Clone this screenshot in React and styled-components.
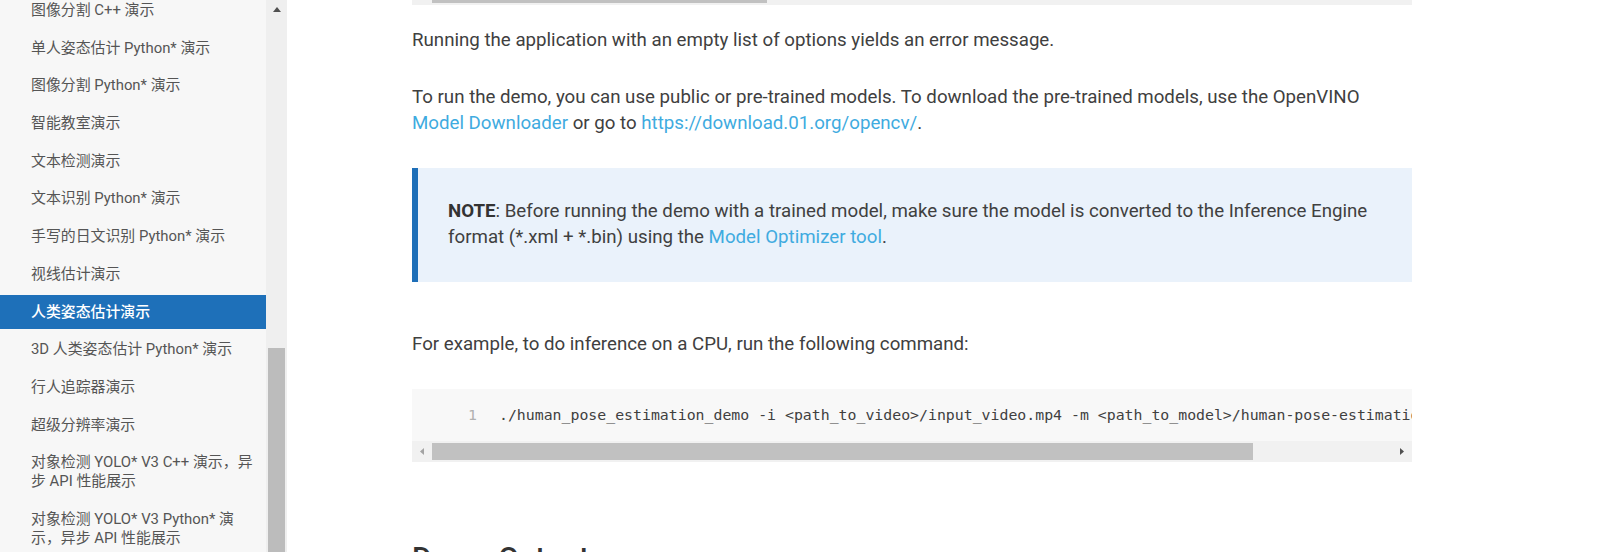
import styled, { createGlobalStyle } from "styled-components";

const GlobalStyle = createGlobalStyle`
  html, body {
    margin: 0;
    padding: 0;
    background: #ffffff;
    overflow: hidden;
  }
  body {
    font-family: Roboto, "Noto Sans CJK SC", sans-serif;
  }
`;

const Page = styled.div`
  display: flex;
  width: 1607px;
  height: 552px;
  overflow: hidden;
`;

const Sidebar = styled.nav`
  width: 266px;
  flex: none;
  background-color: #f7f7f7;
  overflow: hidden;
`;

const NavList = styled.ul`
  list-style: none;
  margin: -6.5px 0 0 0;
  padding: 0;
`;

const NavItem = styled.li`
  padding: 7.5px 8px 7.5px 31px;
  margin-bottom: 3.7px;
  font-family: Roboto, "Noto Sans CJK SC", sans-serif;
  font-size: 14.9px;
  line-height: 19px;
  color: ${(p) => (p.$active ? "#ffffff" : "#555555")};
  background-color: ${(p) => (p.$active ? "#1e70b9" : "transparent")};
  font-weight: ${(p) => (p.$active ? 500 : 400)};
`;

const VScroll = styled.div`
  width: 21px;
  flex: none;
  background-color: #efefef;
  display: flex;
  flex-direction: column;
  align-items: center;
`;

const ArrowBtn = styled.div`
  width: 21px;
  height: 18px;
  display: flex;
  align-items: center;
  justify-content: center;
  flex: none;
`;

const VThumb = styled.div`
  margin-top: 330px;
  width: 17px;
  flex: 1;
  background-color: #bcbcbc;
`;

const Main = styled.main`
  width: 1000px;
  padding-left: 125px;
  flex: none;
  color: #404040;
`;

const HTrack = styled.div`
  display: flex;
  align-items: ${(p) => (p.$top ? "flex-start" : "center")};
  height: ${(p) => p.$h}px;
  background-color: #f1f1f1;
  padding: ${(p) => p.$pad}px 0;
`;

const HThumb = styled.div`
  height: ${(p) => (p.$th ? `${p.$th}px` : "100%")};
  width: ${(p) => p.$w}px;
  margin-left: ${(p) => p.$left}px;
  background-color: #c1c1c1;
`;

const HArrow = styled.div`
  width: 20px;
  height: 100%;
  flex: none;
  display: flex;
  align-items: center;
  justify-content: center;
`;

const Spacer = styled.div`
  flex: 1;
`;

const Para = styled.p`
  margin: ${(p) => p.$top || 0}px 0 0 0;
  font-size: 18.7px;
  line-height: 26.5px;
`;

const Link = styled.a`
  color: #3fabe0;
  text-decoration: none;
`;

const Note = styled.div`
  margin-top: 30.75px;
  background-color: #eaf2fb;
  border-left: 6px solid #1e6fb8;
  padding: 30px 30px 31px 30px;
  font-size: 18.7px;
  line-height: 26.5px;
`;

const Strong = styled.strong`
  font-weight: 700;
  color: #333333;
`;

const CodeBlock = styled.div`
  margin-top: 30.75px;
  background-color: #f8f8f8;
  overflow: hidden;
`;

const CodeLine = styled.div`
  display: flex;
  padding: 16px 0;
  font-family: "DejaVu Sans Mono", "Liberation Mono", monospace;
  font-size: 14.85px;
  line-height: 20px;
  white-space: pre;
`;

const LineNo = styled.span`
  width: 87px;
  flex: none;
  text-align: right;
  padding-right: 22px;
  box-sizing: border-box;
  color: #b0b0b0;
`;

const Code = styled.span`
  color: #404040;
`;

const Heading = styled.h2`
  margin: 78px 0 0 0;
  font-size: 30px;
  font-weight: 500;
  line-height: 36px;
  color: #333333;
`;

const Tri = ({ dir, color, w = 8, h = 5 }) => {
  const pts = {
    up: `0,${h} ${w / 2},0 ${w},${h}`,
    left: `${h},0 0,${w / 2} ${h},${w}`,
    right: `0,0 ${h},${w / 2} 0,${w}`,
  }[dir];
  const vw = dir === "up" ? w : h;
  const vh = dir === "up" ? h : w;
  return (
    <svg width={vw} height={vh} viewBox={`0 0 ${vw} ${vh}`}>
      <polygon points={pts} fill={color} />
    </svg>
  );
};

const navItems = [
  "图像分割 C++ 演示",
  "单人姿态估计 Python* 演示",
  "图像分割 Python* 演示",
  "智能教室演示",
  "文本检测演示",
  "文本识别 Python* 演示",
  "手写的日文识别 Python* 演示",
  "视线估计演示",
  "人类姿态估计演示",
  "3D 人类姿态估计 Python* 演示",
  "行人追踪器演示",
  "超级分辨率演示",
  "对象检测 YOLO* V3 C++ 演示，异步 API 性能展示",
  "对象检测 YOLO* V3 Python* 演示，异步 API 性能展示",
];

export default function App() {
  return (
    <>
      <GlobalStyle />
      <Page>
        <Sidebar>
          <NavList>
            {navItems.map((t) => (
              <NavItem key={t} $active={t === "人类姿态估计演示"}>
                {t}
              </NavItem>
            ))}
          </NavList>
        </Sidebar>
        <VScroll>
          <ArrowBtn>
            <Tri dir="up" color="#505050" />
          </ArrowBtn>
          <VThumb />
        </VScroll>
        <Main>
          <HTrack $h={5} $pad={0} $top>
            <HThumb $w={335} $left={20} $th={3} />
          </HTrack>
          <Para $top={21.75}>
            Running the application with an empty list of options yields an error message.
          </Para>
          <Para $top={30.5}>
            To run the demo, you can use public or pre-trained models. To download the pre-trained models, use the OpenVINO{" "}
            <Link href="#">Model Downloader</Link> or go to{" "}
            <Link href="#">https://download.01.org/opencv/</Link>.
          </Para>
          <Note>
            <Strong>NOTE</Strong>: Before running the demo with a trained model, make sure the model is converted to the Inference Engine
            format (*.xml + *.bin) using the <Link href="#">Model Optimizer tool</Link>.
          </Note>
          <Para $top={49.75}>For example, to do inference on a CPU, run the following command:</Para>
          <CodeBlock>
            <CodeLine>
              <LineNo>1</LineNo>
              <Code>
                ./human_pose_estimation_demo -i &lt;path_to_video&gt;/input_video.mp4 -m &lt;path_to_model&gt;/human-pose-estimation-0001.xml -d CPU
              </Code>
            </CodeLine>
            <HTrack $h={17} $pad={2}>
              <HArrow>
                <Tri dir="left" color="#a3a3a3" w={7} h={4} />
              </HArrow>
              <HThumb $w={821} $left={0} />
              <Spacer />
              <HArrow>
                <Tri dir="right" color="#505050" w={7} h={4} />
              </HArrow>
            </HTrack>
          </CodeBlock>
          <Heading>Demo Output</Heading>
        </Main>
      </Page>
    </>
  );
}
